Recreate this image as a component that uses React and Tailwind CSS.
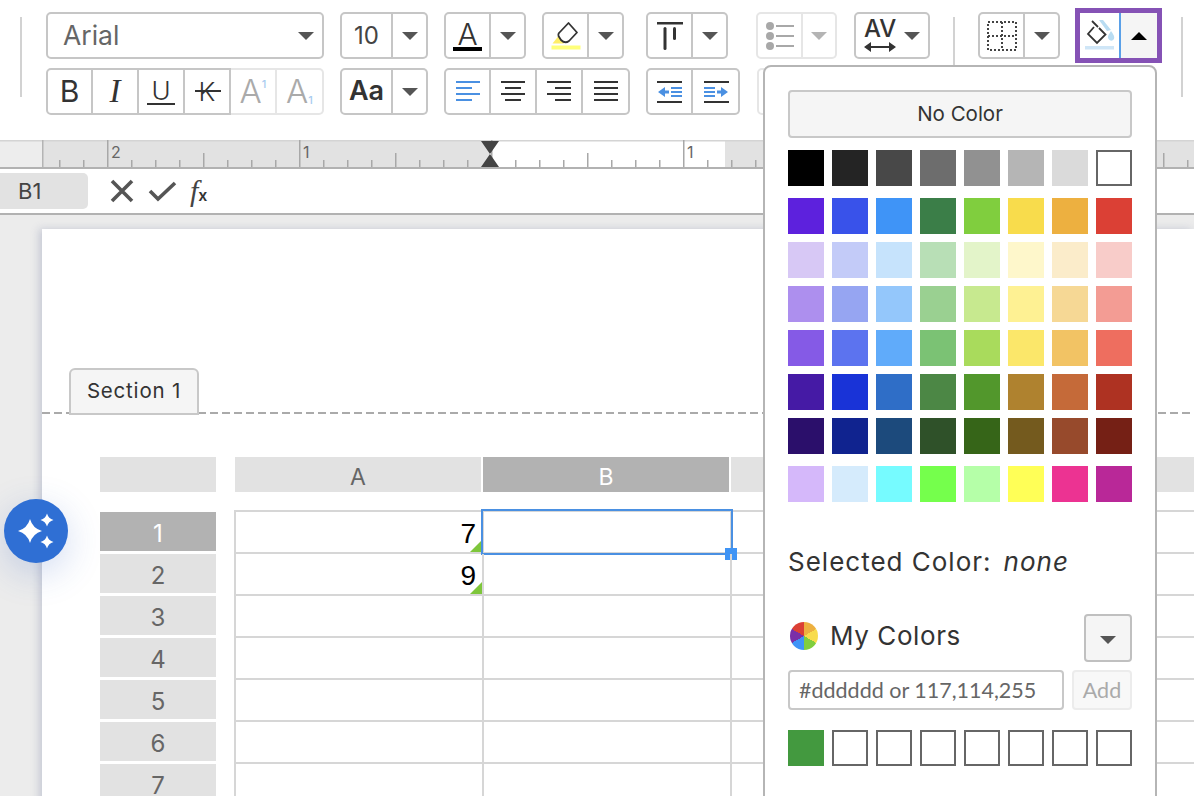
import React from "react";

const grayRow = ["#000000", "#242424", "#484848", "#6d6d6d", "#919191", "#b5b5b5", "#dadada", "#ffffff"];
const swatchRows = [
  ["#5d21dd", "#3952ea", "#3f94f7", "#3b7e48", "#80ce3e", "#f8dc4c", "#edb040", "#db4035"],
  ["#d7c8f5", "#c3cbf8", "#c6e3fc", "#b8dfb6", "#e3f4c9", "#fef7cb", "#fbecca", "#f8ccc9"],
  ["#ad8fee", "#96a5f2", "#94c7fb", "#9ad091", "#c7e98f", "#fef193", "#f6d895", "#f39c94"],
  ["#855ae6", "#5c73ef", "#60abfa", "#7bc274", "#a9db5c", "#fbe76a", "#f2c364", "#ee6e5f"],
  ["#451aa5", "#1933d7", "#2f6ec7", "#4c8745", "#52972c", "#af822f", "#c56a39", "#ae3222"],
  ["#2b0f6b", "#10238f", "#1c4a7c", "#2f5129", "#366518", "#745a1e", "#974a2c", "#752015"],
];
const brightRow = ["#d5b8fa", "#d5ebfc", "#76fbff", "#75ff4c", "#b5ffa8", "#ffff57", "#ec3392", "#b92898"];

const Caret = ({ up, color = "#555555" }) => (
  <svg width="16" height="8" viewBox="0 0 16 8">
    <path d={up ? "M0 8 L8 0 L16 8 Z" : "M0 0 L16 0 L8 8 Z"} fill={color} />
  </svg>
);

// One segment of a button group, the group's outer corners come from first:/last:
const Cell = ({ w, light, children, className = "" }) => (
  <div
    style={{ width: w }}
    className={`flex h-full items-center justify-center border-y-2 border-r-2 bg-white first:rounded-l-[5px] first:border-l-2 last:rounded-r-[5px] ${
      light ? "border-[#e6e6e6]" : "border-[#c6c6c6]"
    } ${className}`}
  >
    {children}
  </div>
);

const Group = ({ children, className = "" }) => (
  <div className={`flex h-[47px] shrink-0 ${className}`}>{children}</div>
);

const Split = ({ icon, className }) => (
  <Group className={className}>
    <Cell w={47}>{icon}</Cell>
    <Cell w={35}>
      <Caret />
    </Cell>
  </Group>
);

const Separator = ({ className = "" }) => (
  <div className={`mt-[5px] h-[80px] w-[2px] shrink-0 bg-[#d2d2d2] ${className}`} />
);

const AlignIcon = ({ lines, color = "#333333" }) => (
  <svg width="26" height="24" viewBox="0 0 26 24">
    {lines.map(([x1, x2], i) => (
      <rect key={i} x={x1} y={1 + i * 6} width={x2 - x1} height="2" fill={color} />
    ))}
  </svg>
);

const IndentIcon = ({ flip }) => (
  <svg width="26" height="24" viewBox="0 0 26 24" style={flip ? { transform: "scaleX(-1)" } : undefined}>
    <rect x="0" y="1" width="25" height="2" fill="#333333" />
    <rect x="0" y="21" width="25" height="2" fill="#333333" />
    <path d="M1 12 L8 7 V10.5 H12 V13.5 H8 V17 Z" fill="#4a90e2" />
    <rect x="14" y="7" width="11" height="2" fill="#4a90e2" />
    <rect x="14" y="11" width="11" height="2" fill="#4a90e2" />
    <rect x="14" y="15" width="11" height="2" fill="#4a90e2" />
  </svg>
);

const Ruler = () => {
  const ticks = [];
  for (let k = -2; k < 46; k++) {
    const x = 107 + k * 24;
    const fromZero = ((k % 8) + 8) % 8;
    const h = fromZero === 0 ? 27 : fromZero === 4 ? 14 : 7;
    ticks.push(<rect key={k} x={x} y={27 - h} width="1.5" height={h} fill="#a8a8a8" />);
  }
  return (
    <svg width="1194" height="29" viewBox="0 0 1194 29" className="block shrink-0">
      <rect width="1194" height="29" fill="#e2e2e2" />
      <rect width="43" height="29" fill="#ededed" />
      <rect x="490" width="235" height="29" fill="#ffffff" />
      <rect width="1194" height="1.5" fill="#d4d4d4" />
      <rect x="42" width="1.5" height="28" fill="#b4b4b4" />
      {ticks}
      <rect y="27" width="1194" height="2" fill="#b2b2b2" />
      <text x="111" y="18" fontSize="16" fill="#666666" fontFamily="Inter, sans-serif">2</text>
      <text x="303" y="18" fontSize="16" fill="#666666" fontFamily="Inter, sans-serif">1</text>
      <text x="687" y="18" fontSize="16" fill="#666666" fontFamily="Inter, sans-serif">1</text>
      <path d="M481 1 H499 L490 14 L499 27 H481 L490 14 Z" fill="#444444" />
    </svg>
  );
};

const Sparkle = ({ cx, cy, r }) => {
  const c = r * 0.22;
  return (
    <path
      fill="#ffffff"
      d={`M${cx} ${cy - r} Q${cx + c} ${cy - c} ${cx + r} ${cy} Q${cx + c} ${cy + c} ${cx} ${cy + r} Q${cx - c} ${cy + c} ${cx - r} ${cy} Q${cx - c} ${cy - c} ${cx} ${cy - r} Z`}
    />
  );
};

const ColorPanel = () => (
  <div className="absolute left-[763px] top-[65px] h-[760px] w-[394px] rounded-t-[8px] border-2 border-[#b5b5b5] bg-white px-[23px] pt-[23px] text-[#333333]">
    <div className="flex h-[48px] items-center justify-center rounded-[4px] border-2 border-[#c8c8c8] bg-[#f5f5f5] text-[20.5px]">
      No Color
    </div>
    <div className="mt-[12px] flex gap-[8px]">
      {grayRow.map((c) => (
        <div
          key={c}
          style={{ backgroundColor: c }}
          className={`h-[36px] w-[36px] ${c === "#ffffff" ? "border-2 border-[#666666]" : ""}`}
        />
      ))}
    </div>
    <div className="mt-[12px] flex flex-col gap-[8px]">
      {swatchRows.map((row, i) => (
        <div key={i} className="flex gap-[8px]">
          {row.map((c) => (
            <div key={c} style={{ backgroundColor: c }} className="h-[36px] w-[36px]" />
          ))}
        </div>
      ))}
    </div>
    <div className="mt-[12px] flex gap-[8px]">
      {brightRow.map((c) => (
        <div key={c} style={{ backgroundColor: c }} className="h-[36px] w-[36px]" />
      ))}
    </div>
    <div className="mt-[42px] flex h-[34px] items-center text-[26px] tracking-[1px]">
      <span>Selected Color:</span>
      <span className="ml-[12px] italic">none</span>
    </div>
    <div className="mt-[36px] flex h-[48px] items-start justify-between">
      <div className="flex items-center gap-[12px] pl-[2px] pt-[2px]">
        <div className="h-[28px] w-[28px] rounded-full bg-[conic-gradient(#edb040_0deg_60deg,#f8dc4c_60deg_120deg,#80ce3e_120deg_180deg,#3f94f7_180deg_240deg,#7a2fa8_240deg_300deg,#db4035_300deg_360deg)]" />
        <span className="text-[26px] tracking-[0.6px]">My Colors</span>
      </div>
      <div className="flex h-[48px] w-[48px] items-center justify-center rounded-[4px] border-2 border-[#c0c0c0] bg-[#f5f5f5] pt-[4px]">
        <Caret />
      </div>
    </div>
    <div className="mt-[8px] flex h-[40px] gap-[8px]">
      <div className="flex w-[276px] items-center rounded-[4px] border-2 border-[#c8c8c8] pl-[9px] font-['Lato',sans-serif] text-[21.5px] text-[#666666]">
        #dddddd or 117,114,255
      </div>
      <div className="flex w-[60px] items-center justify-center rounded-[4px] border-2 border-[#ececec] bg-[#f8f8f8] font-['Lato',sans-serif] text-[21.5px] text-[#aaaaaa]">
        Add
      </div>
    </div>
    <div className="mt-[20px] flex gap-[8px]">
      <div className="h-[36px] w-[36px] bg-[#43993f]" />
      {[1, 2, 3, 4, 5, 6, 7].map((n) => (
        <div key={n} className="h-[36px] w-[36px] border-2 border-[#666666]" />
      ))}
    </div>
  </div>
);

const Toolbar = () => (
  <div className="flex h-[140px] shrink-0 bg-white pt-[12px]">
    <Separator className="ml-[20px] mr-[24px]" />
    <div className="flex flex-col gap-[9px]">
      <div className="flex h-[47px] items-start">
        <div className="flex h-[47px] w-[278px] items-center justify-between rounded-[5px] border-2 border-[#c6c6c6] pl-[15px] pr-[8px] text-[26.5px] text-[#666666]">
          <span className="pt-[1px]">Arial</span>
          <Caret />
        </div>
        <Group className="ml-[16px]">
          <Cell w={53}>
            <span className="text-[24px] text-[#444444]">10</span>
          </Cell>
          <Cell w={35}>
            <Caret />
          </Cell>
        </Group>
        <Split
          className="ml-[16px]"
          icon={
            <div className="flex flex-col items-center">
              <span className="h-[26px] text-[30px] font-light leading-[28px] text-[#333333]">A</span>
              <div className="mt-[1px] h-[4px] w-[29px] bg-black" />
            </div>
          }
        />
        <Split
          className="ml-[16px]"
          icon={
            <svg width="30" height="30" viewBox="0 0 30 30">
              <path d="M1.5 22.5 L7.5 15 L13 22.5 Z" fill="#ffee66" />
              <path d="M17.5 2 L26 11.5 L18 20 Q14 23 10 19 L7.5 15 Q7 13 8 12 Z" fill="none" stroke="#333333" strokeWidth="1.8" strokeLinejoin="round" />
              <rect x="0.5" y="24.5" width="29" height="4" fill="#ffff7a" />
            </svg>
          }
        />
        <Split
          className="ml-[22px]"
          icon={
            <svg width="26" height="28" viewBox="0 0 26 28">
              <rect x="0" y="0" width="26" height="2.5" fill="#333333" />
              <rect x="6.5" y="5" width="3" height="23" rx="1.5" fill="#333333" />
              <rect x="16" y="5" width="3" height="13" rx="1.5" fill="#333333" />
            </svg>
          }
        />
        <Group className="ml-[28px]">
          <Cell w={47} light>
            <svg width="30" height="30" viewBox="0 0 30 30">
              {[5, 15, 25].map((y) => (
                <g key={y}>
                  <circle cx="5" cy={y} r="4" fill="#a8a8a8" />
                  <rect x="11" y={y - 1} width="18" height="2" fill="#a8a8a8" />
                </g>
              ))}
            </svg>
          </Cell>
          <Cell w={34} light>
            <Caret color="#b4b4b4" />
          </Cell>
        </Group>
        <div className="ml-[17px] flex h-[47px] w-[76px] shrink-0 items-center gap-[8px] rounded-[5px] border-2 border-[#c6c6c6] pl-[8px]">
          <div className="flex flex-col items-center">
            <span className="h-[20px] text-[24px] font-medium leading-[22px] text-[#333333]">AV</span>
            <svg width="32" height="12" viewBox="0 0 32 12" className="mt-[3px]">
              <path d="M0 6 L7 1 V5 H25 V1 L32 6 L25 11 V7 H7 V11 Z" fill="#333333" />
            </svg>
          </div>
          <Caret />
        </div>
        <Separator className="ml-[23px] mr-[23px]" />
        <Split
          icon={
            <svg width="32" height="32" viewBox="0 0 32 32">
              <g fill="none" stroke="#444444" strokeWidth="2" strokeDasharray="2 2">
                <rect x="2" y="2" width="28" height="28" />
                <path d="M16 2 V30 M2 16 H30" />
              </g>
            </svg>
          }
        />
        <div className="ml-[15px] -mt-[4px] flex h-[55px] w-[87px] shrink-0 border-[5px] border-[#8552b5] bg-white">
          <div className="flex w-[41px] items-center justify-center border-r-2 border-[#5aa0e8]">
            <svg width="30" height="32" viewBox="0 0 30 32">
              <path d="M9 7 L3 14 L12 23 L20.5 14.5 L14 8" fill="none" stroke="#333333" strokeWidth="1.8" />
              <path d="M7 1 L13 7" fill="none" stroke="#333333" strokeWidth="1.8" />
              <path d="M14 0 L18 0 L26 10 L22 11 Z" fill="#b8dcf2" />
              <path d="M26 11 Q30 16 29 19 Q27 22 24.500 20 Q22 18 23.500 15 Z" fill="#b8dcf2" />
              <rect x="0" y="26" width="29" height="3.500" fill="#cfe6f7" />
            </svg>
          </div>
          <div className="flex flex-1 items-center justify-center bg-[#f5f5f5]">
            <Caret up color="#000000" />
          </div>
        </div>
        <Separator className="ml-[19px]" />
      </div>
      <div className="flex h-[47px] items-start">
        <Group>
          <Cell w={47}>
            <span className="text-[30px] text-[#333333]">B</span>
          </Cell>
          <Cell w={46}>
            <span className="font-['Liberation_Serif',serif] text-[33px] italic text-[#333333]">I</span>
          </Cell>
          <Cell w={46}>
            <span className="h-[26px] w-[28px] border-b-2 border-[#333333] text-center text-[26px] font-light leading-[24px] text-[#333333]">
              U
            </span>
          </Cell>
          <Cell w={46}>
            <span className="relative text-[26px] font-light text-[#333333]">
              K
              <span className="absolute -left-[4px] top-[18px] h-[2px] w-[26px] bg-[#333333]" />
            </span>
          </Cell>
          <Cell w={46} light>
            <span className="text-[33px] font-light text-[#aaaaaa]">A</span>
            <span className="-mt-[14px] text-[11px] font-medium text-[#a8cbf0]">1</span>
          </Cell>
          <Cell w={47} light>
            <span className="text-[33px] font-light text-[#aaaaaa]">A</span>
            <span className="mt-[18px] text-[11px] font-medium text-[#a8cbf0]">1</span>
          </Cell>
        </Group>
        <Group className="ml-[16px]">
          <Cell w={53}>
            <span className="text-[27px] font-semibold text-[#333333]">Aa</span>
          </Cell>
          <Cell w={35}>
            <Caret />
          </Cell>
        </Group>
        <Group className="ml-[16px]">
          <Cell w={47}>
            <AlignIcon color="#4a90e2" lines={[[1, 25], [1, 17], [1, 25], [1, 17]]} />
          </Cell>
          <Cell w={46}>
            <AlignIcon lines={[[1, 25], [5, 21], [1, 25], [5, 21]]} />
          </Cell>
          <Cell w={46}>
            <AlignIcon lines={[[1, 25], [9, 25], [1, 25], [9, 25]]} />
          </Cell>
          <Cell w={47}>
            <AlignIcon lines={[[1, 25], [1, 25], [1, 25], [1, 25]]} />
          </Cell>
        </Group>
        <Group className="ml-[16px]">
          <Cell w={47}>
            <IndentIcon />
          </Cell>
          <Cell w={47}>
            <IndentIcon flip />
          </Cell>
        </Group>
        <Group className="ml-[17px]">
          <Cell w={47} light />
        </Group>
      </div>
    </div>
  </div>
);

const FormulaBar = () => (
  <div className="flex h-[46px] shrink-0 items-center border-b-2 border-[#b2b2b2] bg-white">
    <div className="flex h-[36px] w-[88px] items-center rounded-r-[5px] bg-[#e2e2e2] pl-[18px] text-[22px] text-[#444444]">
      B1
    </div>
    <svg width="24" height="24" viewBox="0 0 24 24" className="ml-[22px]">
      <path d="M2 2 L22 22 M22 2 L2 22" stroke="#555555" strokeWidth="3.6" fill="none" />
    </svg>
    <svg width="29" height="22" viewBox="0 0 29 22" className="ml-[14px]">
      <path d="M2 11 L10 19 L27 3" stroke="#555555" strokeWidth="3.6" fill="none" />
    </svg>
    <span className="ml-[13px] font-['Liberation_Serif',serif] text-[30px] italic leading-none text-[#444444]">f</span>
    <span className="mt-[8px] text-[16px] font-semibold leading-none text-[#333333]">x</span>
  </div>
);

const HeaderCell = ({ active, children, className = "" }) => (
  <div
    className={`flex h-[35px] items-center justify-center pt-[5px] text-[23px] ${
      active ? "bg-[#b2b2b2] text-white" : "bg-[#e2e2e2] text-[#666666]"
    } ${className}`}
  >
    {children}
  </div>
);

const GridRow = ({ n, value, selected }) => (
  <div className="flex h-[42px]">
    <div
      className={`ml-[58px] mr-[18px] flex h-[39px] w-[116px] shrink-0 items-center justify-center pt-[4px] text-[24px] ${
        selected ? "bg-[#b2b2b2] text-white" : "bg-[#e2e2e2] text-[#666666]"
      }`}
    >
      {n}
    </div>
    <div className="relative flex h-full w-[250px] shrink-0 items-center justify-end border-x-2 border-b-2 border-[#d6d6d6] pr-[6px] pt-[4px] font-['Liberation_Sans',sans-serif] text-[28px] text-black">
      {value}
      {value && (
        <div className="absolute bottom-0 right-0 h-[12px] w-[12px] bg-[#7ec63b] [clip-path:polygon(100%_0,100%_100%,0_100%)]" />
      )}
    </div>
    <div className="relative h-full w-[248px] shrink-0 border-b-2 border-r-2 border-[#d6d6d6]">
      {selected && (
        <div className="absolute -left-[3px] -top-[3px] h-[46px] w-[252px] border-2 border-[#4a90e2]">
          <div className="absolute -bottom-[7px] -right-[6px] h-[12px] w-[12px] bg-[#3f94f5]" />
        </div>
      )}
    </div>
    <div className="h-full w-[248px] shrink-0 border-b-2 border-r-2 border-[#d6d6d6]" />
    <div className="h-full w-[248px] shrink-0 border-b-2 border-r-2 border-[#d6d6d6]" />
  </div>
);

const Sheet = () => (
  <div className="ml-[42px] mt-[14px] flex-1 bg-white pt-[139px] shadow-[-3px_0_8px_rgba(110,120,160,0.3)]">
    <div className="relative z-10 ml-[27px] flex h-[47px] w-[130px] items-center justify-center rounded-t-[6px] border-2 border-[#c8c8c8] bg-[#f5f5f5] text-[20.5px] tracking-[0.8px] text-[#333333]">
      Section 1
    </div>
    <div className="-mt-[3px] h-[2px] bg-[repeating-linear-gradient(90deg,#aaaaaa_0px,#aaaaaa_8px,transparent_8px,transparent_12px)]" />
    <div className="mt-[43px] flex">
      <HeaderCell className="ml-[58px] w-[116px] shrink-0" />
      <HeaderCell className="ml-[19px] w-[246px] shrink-0">A</HeaderCell>
      <HeaderCell active className="ml-[2px] w-[246px] shrink-0">B</HeaderCell>
      <HeaderCell className="ml-[2px] w-[246px] shrink-0">C</HeaderCell>
      <HeaderCell className="ml-[2px] w-[246px] shrink-0">D</HeaderCell>
    </div>
    <div className="ml-[192px] mt-[18px] h-[2px] w-[1000px] bg-[#d6d6d6]" />
    <GridRow n={1} value="7" selected />
    <GridRow n={2} value="9" />
    <GridRow n={3} />
    <GridRow n={4} />
    <GridRow n={5} />
    <GridRow n={6} />
    <GridRow n={7} />
  </div>
);

export default function App() {
  return (
    <div className="relative flex h-[796px] w-[1194px] flex-col overflow-hidden bg-[#ececec] font-['Inter',sans-serif]">
      <Toolbar />
      <Ruler />
      <FormulaBar />
      <Sheet />
      <div className="absolute left-[4px] top-[499px] z-20 h-[64px] w-[64px] rounded-full bg-[#2f6fd4] shadow-[0_10px_36px_rgba(47,90,190,0.22)]">
        <svg width="64" height="64" viewBox="0 0 64 64">
          <Sparkle cx={26} cy={32} r={12} />
          <Sparkle cx={43} cy={21} r={6.5} />
          <Sparkle cx={43} cy={43} r={6.5} />
        </svg>
      </div>
      <ColorPanel />
    </div>
  );
}
